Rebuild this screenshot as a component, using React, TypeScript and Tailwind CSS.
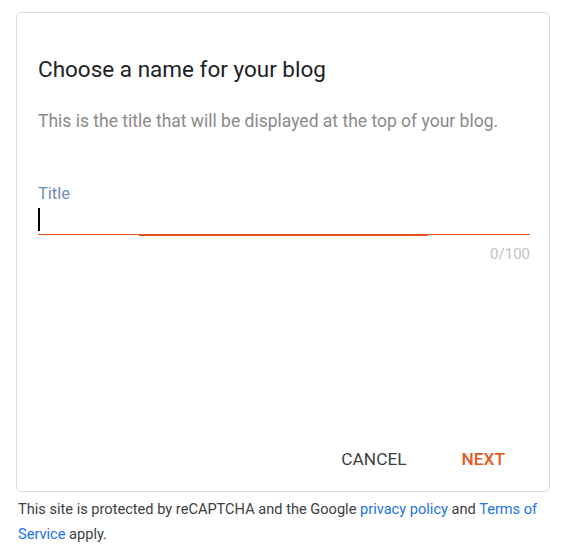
export default function App() {
  return (
    <div className="min-h-screen bg-white font-['Roboto',sans-serif] pt-[12px] px-[16px]">
      {/* ── Dialog card ── */}
      <div className="w-[534px] h-[480px] border border-[#dadce0] rounded-[5px] flex flex-col px-[21px]">
        <h1 className="mt-[41px] text-[22.5px] leading-[30px] text-[#202124]">Choose a name for your blog</h1>
        <p className="mt-[24px] text-[17.5px] leading-[26px] text-[#8a8a8a]">
          This is the title that will be displayed at the top of your blog.
        </p>

        <label className="mt-[49px] text-[16.5px] leading-[22px] text-[#6b8fb8]">Title</label>
        <div className="relative h-[30px] w-[492px]">
          <span className="absolute left-0 top-[3px] w-[2px] h-[23px] bg-black" />
          <span className="absolute left-0 bottom-0 h-[1px] w-full bg-[#e0561c]" />
          <span className="absolute left-[101px] -bottom-[1px] h-[2px] w-[289px] bg-[#e0561c]" />
        </div>
        <div className="w-[492px] mt-[9px] text-right text-[15px] leading-[20px] text-[#c2c2c2]">0/100</div>

        <div className="mt-auto mb-[20px] flex justify-end gap-[55px] pr-[23px]">
          <button className="text-[17.3px] leading-[24px] text-[#3c4043]">CANCEL</button>
          <button className="text-[17.3px] leading-[24px] font-medium text-[#e8591c]">NEXT</button>
        </div>
      </div>

      {/* ── reCAPTCHA note ── */}
      <p className="mt-[5px] ml-[2px] text-[14.6px] leading-[25px] text-[#3c4043] w-[530px]">
        This site is protected by reCAPTCHA and the Google{' '}
        <a className="text-[#1a73e8]">privacy policy</a> and{' '}
        <a className="text-[#1a73e8]">Terms of Service</a> apply.
      </p>
    </div>
  );
}
